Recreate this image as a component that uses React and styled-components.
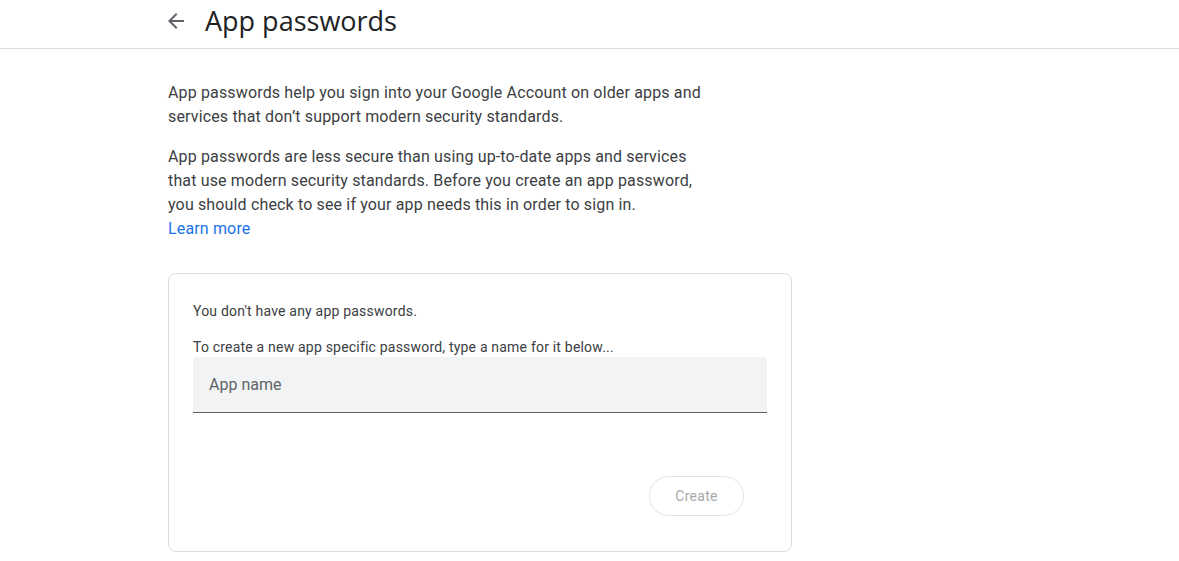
import styled, { createGlobalStyle } from 'styled-components';

const GlobalStyle = createGlobalStyle`
  body {
    margin: 0;
    background: #fff;
    font-family: Roboto, "Liberation Sans", Arial, sans-serif;
    color: #3c4043;
  }
`;

const Header = styled.header`
  height: 55px;
  margin-top: -6px;
  display: flex;
  align-items: center;
  padding-left: 164px;
  border-bottom: 1px solid #dadce0;
  box-sizing: border-box;
`;

const BackButton = styled.button`
  width: 24px;
  height: 24px;
  padding: 0;
  border: none;
  background: none;
  display: flex;
  align-items: center;
  justify-content: center;
  cursor: pointer;
  margin-right: 17px;
`;

const Title = styled.h1`
  margin: 0 0 2px;
  font-family: "Open Sans", Roboto, sans-serif;
  font-size: 27px;
  font-weight: 400;
  color: #202124;
`;

const Main = styled.main`
  padding: 32px 0 0 168px;
`;

const Paragraph = styled.p`
  margin: 0 0 16px;
  width: 540px;
  font-size: 16px;
  line-height: 24px;
  letter-spacing: 0.15px;
  color: #3c4043;
`;

const Link = styled.a`
  color: #1a73e8;
  text-decoration: none;
`;

const Card = styled.section`
  margin-top: 32px;
  width: 624px;
  box-sizing: border-box;
  border: 1px solid #dadce0;
  border-radius: 8px;
  padding: 27px 24px 35px;
`;

const Note = styled.div`
  font-size: 14px;
  line-height: 20px;
  letter-spacing: 0.2px;
  color: #3c4043;
  margin-bottom: ${(p) => p.$gap || 0}px;
`;

const Field = styled.div`
  height: 56px;
  box-sizing: border-box;
  background: #f1f3f4;
  border-radius: 4px 4px 0 0;
  border-bottom: 1px solid #5f6368;
  display: flex;
  align-items: center;
  padding: 0 16px;
  font-size: 16px;
  color: #5f6368;
`;

const Actions = styled.div`
  display: flex;
  justify-content: flex-end;
  padding: 63px 23px 0 0;
`;

const CreateButton = styled.button`
  width: 95px;
  height: 40px;
  border: 1px solid #e3e3e3;
  border-radius: 20px;
  background: #fff;
  color: #a8a8a8;
  font-family: inherit;
  font-size: 14px;
  letter-spacing: 0.25px;
`;

export default function App() {
  return (
    <>
      <GlobalStyle />
      <Header>
        <BackButton aria-label="Back">
          <svg width="24" height="24" viewBox="0 0 24 24" fill="#5f6368">
            <path d="M20 11H7.83l5.59-5.59L12 4l-8 8 8 8 1.41-1.41L7.83 13H20v-2z" />
          </svg>
        </BackButton>
        <Title>App passwords</Title>
      </Header>
      <Main>
        <Paragraph>
          App passwords help you sign into your Google Account on older apps and
          services that don’t support modern security standards.
        </Paragraph>
        <Paragraph>
          App passwords are less secure than using up-to-date apps and services
          that use modern security standards. Before you create an app password,
          you should check to see if your app needs this in order to sign in.
          <br />
          <Link href="#">Learn more</Link>
        </Paragraph>
        <Card>
          <Note $gap={16}>You don't have any app passwords.</Note>
          <Note>To create a new app specific password, type a name for it below...</Note>
          <Field>App name</Field>
          <Actions>
            <CreateButton disabled>Create</CreateButton>
          </Actions>
        </Card>
      </Main>
    </>
  );
}
